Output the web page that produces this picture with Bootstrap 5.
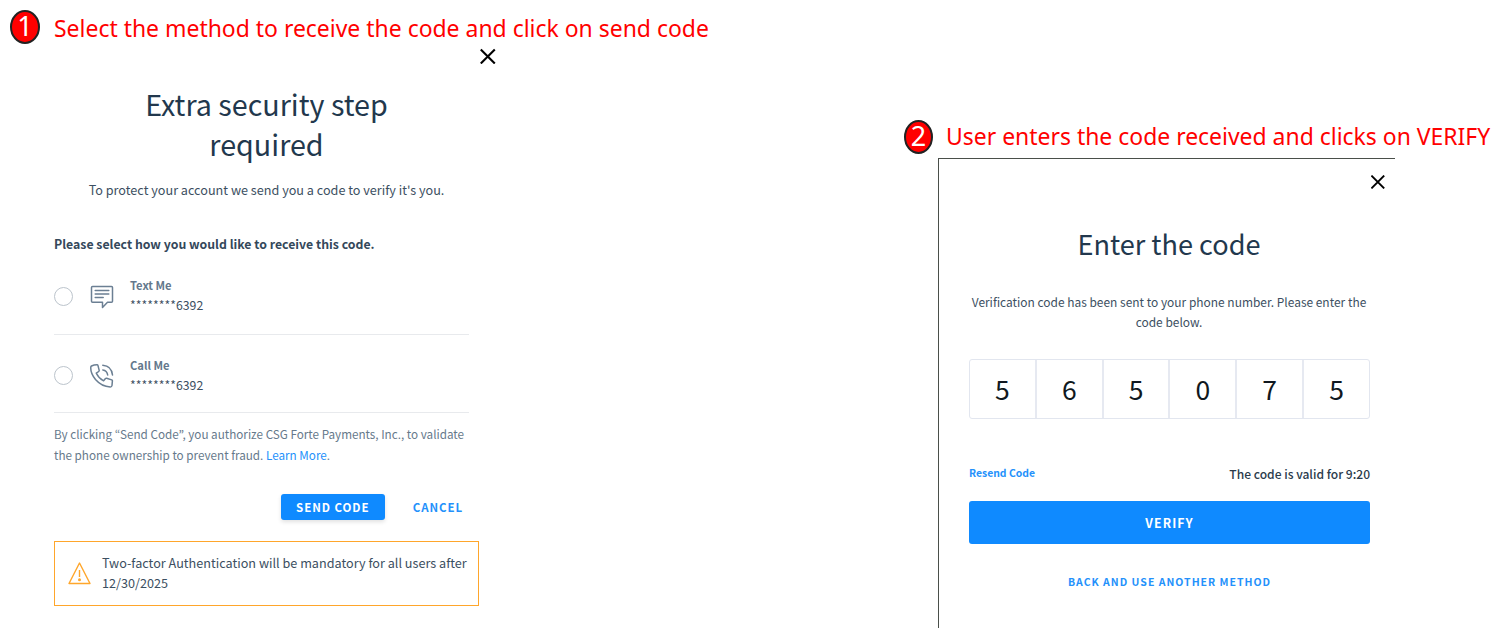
<!DOCTYPE html>
<html lang="en">

<head>
    <meta charset="UTF-8">
    <title>Two-factor authentication steps</title>
    <link href="https://cdn.jsdelivr.net/npm/bootstrap@5.3.0/dist/css/bootstrap.min.css" rel="stylesheet">
    <style>
        body {
            font-family: "Noto Sans CJK KR", "Noto Sans", sans-serif;
            font-size: 12px;
            line-height: 20px;
            color: #3c4f61;
            background: #fff;
        }

        .step-one {
            width: 904px;
            padding: 10px 0 0 10px;
        }

        .step-two {
            padding-top: 120px;
        }

        /* red notes above each dialog */
        .step-note {
            font-family: "Noto Sans", sans-serif;
            font-size: 22.95px;
            height: 34px;
            color: #f00;
            white-space: nowrap;
        }

        .note-one {
            line-height: 36px;
            margin-left: 14px;
        }

        .note-two {
            line-height: 32px;
            margin-left: 13px;
        }

        .step-number {
            width: 30px;
            height: 34px;
            border: 2px solid #222;
            border-radius: 50%;
            background: #f00;
            color: #fff;
            font-size: 27px;
            line-height: 28px;
        }

        .step-two .step-number {
            width: 29px;
        }

        .dialog-one {
            width: 425px;
            margin-left: 44px;
            padding-top: 4px;
        }

        .dialog-one .close-icon {
            margin-right: -17px;
        }

        .dialog-two {
            width: 457px;
            height: 470px;
            margin: 4px 0 0 34px;
            padding: 16px 25px 0 30px;
            border-top: 1px solid #4a4f4a;
            border-left: 1px solid #4a4f4a;
        }

        .dialog-two .close-icon {
            margin-right: -15px;
        }

        .dialog-title {
            font-size: 28.7px;
            line-height: 40px;
            font-weight: 400;
            color: #22384d;
            margin: 20px 0 16px;
        }

        .dialog-two .dialog-title {
            font-size: 27.1px;
            margin: 35px 0 28px -1px;
        }

        .intro {
            font-size: 12.65px;
            margin-bottom: 34px;
        }

        .ask {
            font-size: 12.3px;
            font-weight: 700;
            color: #34485b;
            margin-bottom: 2px;
        }

        .option {
            width: 415px;
            height: 79px;
            padding-top: 3px;
            border-bottom: 1px solid #e8eaed;
        }

        .option+.option {
            height: 78px;
            padding-top: 4px;
        }

        .option .form-check-input {
            width: 19px;
            height: 19px;
            border-color: #bcc4cc;
            margin: 0 17px 0 0;
        }

        .option-label {
            font-size: 11.2px;
            font-weight: 700;
            color: #64788c;
        }

        .option-text {
            font-size: 12.3px;
            margin: -3px 0 0 16px;
        }

        .option+.option .option-text {
            margin-top: -1px;
        }

        .legal {
            font-size: 11.7px;
            line-height: 21px;
            color: #66798b;
            margin: 10px 0 29px;
        }

        .blue-link {
            color: #2491fb;
            text-decoration: none;
        }

        .dialog-actions {
            gap: 28px;
            padding-right: 16px;
            margin-bottom: 21px;
        }

        .btn-blue {
            background: #0f8aff;
            color: #fff;
            font-weight: 700;
            border: 0;
            border-radius: 3px;
        }

        .btn-send {
            width: 104px;
            height: 26px;
            padding: 0 0 1px;
            font-size: 11.5px;
            letter-spacing: .95px;
            box-shadow: 0 2px 4px rgba(0, 0, 0, .12);
        }

        .cancel-link {
            font-size: 11.5px;
            font-weight: 700;
            letter-spacing: .9px;
        }

        .warning-box {
            height: 65px;
            padding: 0 0 2px 13px;
            border: 1px solid #ffa62b;
            font-size: 12.65px;
        }

        .warning-box svg {
            margin-right: 10px;
        }

        .code-sent {
            font-size: 11.95px;
            margin: 0 0 27px -1px;
        }

        .code-cells {
            height: 60px;
            border: 1px solid #e2e6ef;
            border-radius: 3px;
            font-size: 26.5px;
            color: #101820;
        }

        .code-cell+.code-cell {
            border-left: 2px solid #e6e9f1;
        }

        .code-status {
            margin: 44px 0 17px;
            font-weight: 500;
        }

        .resend-link {
            font-size: 10.4px;
            font-weight: 700;
        }

        .code-timer {
            font-size: 12.05px;
            color: #2a3b4b;
            padding-top: 1px;
        }

        .btn-verify {
            height: 43px;
            font-size: 12.3px;
            letter-spacing: 1.1px;
            margin-bottom: 27px;
        }

        .back-link {
            font-size: 10.5px;
            font-weight: 700;
            letter-spacing: 1px;
        }
    </style>
</head>

<body>
    <div class="d-flex overflow-hidden">
        <section class="step-one flex-shrink-0">
            <div class="step-note d-flex">
                <span class="step-number text-center">1</span>
                <span class="note-one">Select the method to receive the code and click on send code</span>
            </div>

            <div class="dialog-one">
                <div class="d-flex justify-content-end">
                    <svg class="close-icon" width="16" height="16" viewBox="0 0 16 16" stroke="#000" stroke-width="2.1">
                        <path d="M.8 1.500l14 14M14.800 1.500L.8 15.500" />
                    </svg>
                </div>
                <h1 class="dialog-title text-center">Extra security step<br>required</h1>
                <p class="intro text-center">To protect your account we send you a code to verify it's you.</p>
                <p class="ask">Please select how you would like to receive this code.</p>

                <div class="option d-flex align-items-center">
                    <input class="form-check-input" type="radio" name="method">
                    <svg width="24" height="24" viewBox="0 0 24 24" fill="none" stroke="#6b7f93" stroke-width="1.5" stroke-linejoin="round" stroke-linecap="round">
                        <path d="M2.500 1.500h19q1 0 1 1v13.800q0 1-1 1H17.500L12.500 22.500V17.300H2.500q-1 0-1-1V2.500q0-1 1-1z" />
                        <path d="M5.200 5.500h13.600M5.200 9h13.600M5.200 12.500h8" />
                    </svg>
                    <div class="option-text">
                        <div class="option-label">Text Me</div>
                        <div>********6392</div>
                    </div>
                </div>
                <div class="option d-flex align-items-center">
                    <input class="form-check-input" type="radio" name="method">
                    <svg width="24" height="24" viewBox="0 0 24 24" fill="none" stroke="#6b7f93" stroke-width="1.5" stroke-linejoin="round" stroke-linecap="round">
                        <path d="M1.500 2Q4 .8 7 .8q.8 0 1 .8l1.200 4.800q.1.700-.5 1.100L6.300 9.200q2.300 4.900 7.300 7.600l1.900-2.300q.5-.5 1.100-.3l5.100 1.700q.8.300.7 1l-.4 4.600q-.2 1.500-1.700 1.500Q11.500 22.500 5.500 15.500 .3 9 .8 3.200q0-.8.7-1.200z" />
                        <path d="M12.800 1.200q8.700.6 9.700 9.800M12.800 5.900q4.200.5 4.900 5.100" />
                    </svg>
                    <div class="option-text">
                        <div class="option-label">Call Me</div>
                        <div>********6392</div>
                    </div>
                </div>

                <p class="legal text-nowrap">By clicking “Send Code”, you authorize CSG Forte Payments, Inc., to validate<br>the phone ownership to prevent fraud. <a class="blue-link" href="#">Learn More</a>.</p>

                <div class="dialog-actions d-flex justify-content-end align-items-center">
                    <button class="btn-blue btn-send">SEND CODE</button>
                    <a class="blue-link cancel-link" href="#">CANCEL</a>
                </div>

                <div class="warning-box d-flex align-items-center">
                    <svg class="flex-shrink-0" width="24" height="24" viewBox="0 0 24 24" fill="none" stroke="#ffa62b" stroke-width="1.4" stroke-linejoin="round">
                        <path d="M11.500 2L1 22.500h21zM11.500 9v7" />
                        <circle cx="11.500" cy="18.700" r="1.500" fill="#ffa62b" stroke="none" />
                    </svg>
                    <div class="text-nowrap">Two-factor Authentication will be mandatory for all users after<br>12/30/2025</div>
                </div>
            </div>
        </section>

        <section class="step-two">
            <div class="step-note d-flex">
                <span class="step-number text-center">2</span>
                <span class="note-two">User enters the code received and clicks on VERIFY</span>
            </div>

            <div class="dialog-two">
                <div class="d-flex justify-content-end">
                    <svg class="close-icon" width="14" height="14" viewBox="0 0 14 14" stroke="#000" stroke-width="1.9">
                        <path d="M.4 .6l12.800 12.800M13.200 .6L.4 13.400" />
                    </svg>
                </div>
                <h2 class="dialog-title text-center">Enter the code</h2>
                <p class="code-sent text-center text-nowrap">Verification code has been sent to your phone number. Please enter the<br>code below.</p>

                <div class="code-cells d-flex text-center">
                    <div class="code-cell col d-flex align-items-center justify-content-center">5</div>
                    <div class="code-cell col d-flex align-items-center justify-content-center">6</div>
                    <div class="code-cell col d-flex align-items-center justify-content-center">5</div>
                    <div class="code-cell col d-flex align-items-center justify-content-center">0</div>
                    <div class="code-cell col d-flex align-items-center justify-content-center">7</div>
                    <div class="code-cell col d-flex align-items-center justify-content-center">5</div>
                </div>

                <div class="code-status d-flex justify-content-between">
                    <a class="blue-link resend-link" href="#">Resend Code</a>
                    <span class="code-timer">The code is valid for 9:20</span>
                </div>
                <button class="btn-blue btn-verify d-block w-100">VERIFY</button>
                <div class="text-center"><a class="blue-link back-link" href="#">BACK AND USE ANOTHER METHOD</a></div>
            </div>
        </section>
    </div>

    <script src="https://cdn.jsdelivr.net/npm/bootstrap@5.3.0/dist/js/bootstrap.bundle.min.js"></script>
</body>

</html>
